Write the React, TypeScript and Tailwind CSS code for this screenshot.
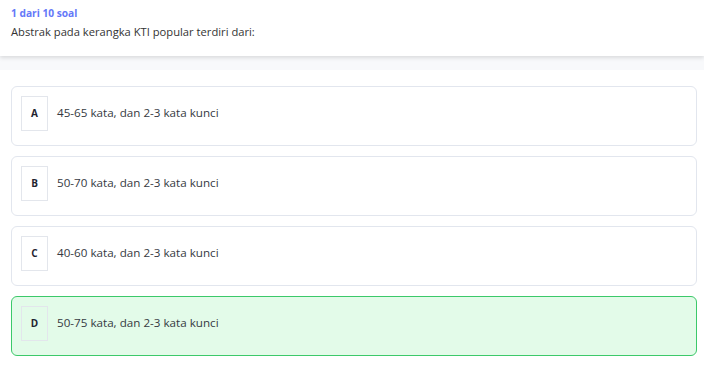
const options = [
	{ key: "A", text: "45-65 kata, dan 2-3 kata kunci" },
	{ key: "B", text: "50-70 kata, dan 2-3 kata kunci" },
	{ key: "C", text: "40-60 kata, dan 2-3 kata kunci" },
	{ key: "D", text: "50-75 kata, dan 2-3 kata kunci" },
];

const selected = "D";

const App = () => {
	return (
		<div className="min-h-[365px] w-[704px] bg-white font-['Open_Sans',sans-serif]">
			<header className="relative z-10 h-[56px] bg-white px-[11px] pt-[5px] shadow-[0_2px_4px_rgba(0,0,0,0.12)]">
				<h1 className="text-[10.2px] font-bold leading-[16px] text-[#6478f8]">1 dari 10 soal</h1>
				<p className="mt-[3px] text-[11.2px] leading-[16px] text-[#333]">Abstrak pada kerangka KTI popular terdiri dari:</p>
			</header>
			<div className="h-[14px] bg-[#f8f9fb]" />
			<div className="flex flex-col gap-[10px] pl-[11px] pr-[7px] pt-[16px]">
				{options.map((o) => {
					const active = o.key === selected;
					return (
						<div
							key={o.key}
							className={
								active
									? "flex h-[60px] items-start gap-[9px] rounded-[6px] border border-[#3cc96a] bg-[#e3fbe9] px-[9px] pt-[9px]"
									: "flex h-[60px] items-start gap-[9px] rounded-[6px] border border-[#e2e6ee] bg-white px-[9px] pt-[9px]"
							}
						>
							<div className="flex h-[35px] w-[27px] shrink-0 items-center justify-center border border-[#e3e6ec] text-[10px] font-bold text-[#1f2430]">
								{o.key}
							</div>
							<span className="text-[11.65px] leading-[33px] text-[#363a42]">{o.text}</span>
						</div>
					);
				})}
			</div>
		</div>
	);
};

export default App;
